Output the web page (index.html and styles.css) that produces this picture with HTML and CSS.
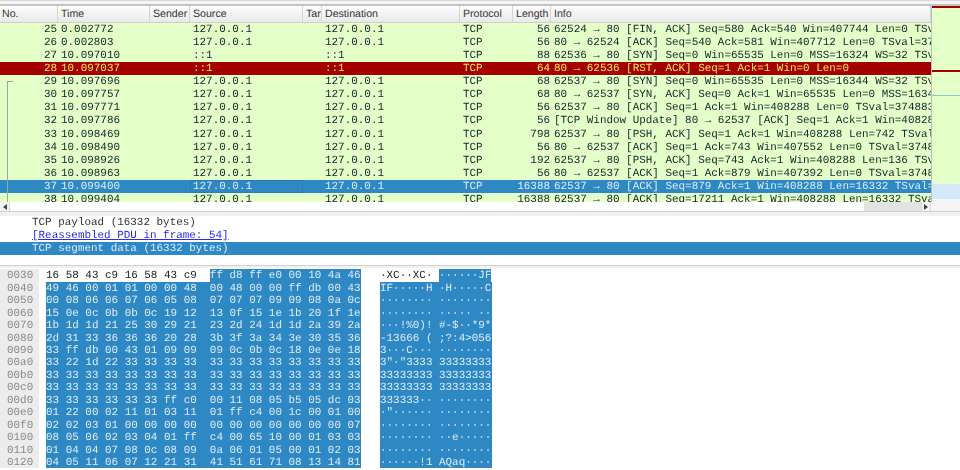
FILE: index.html
```html
<!DOCTYPE html>
<html lang="en">
<head>
<meta charset="utf-8">
<title>Wireshark packet capture</title>
<link rel="stylesheet" href="styles.css">
</head>
<body>
<div class="app">
  <div class="topstrip"></div>
  <section class="packets">
    <div class="list">
      <div class="row head">
        <span class="c no">No.</span><span class="c time">Time</span><span class="c sender">Sender</span><span class="c src">Source</span><span class="c tar">Tar</span><span class="c dst">Destination</span><span class="c proto">Protocol</span><span class="c len">Length</span><span class="c info">Info</span>
      </div>
      <div class="rows">
        <div class="bracket"></div>
        <div class="row"><span class="c no">25</span><span class="c time">0.002772</span><span class="c sender"></span><span class="c src">127.0.0.1</span><span class="c tar"></span><span class="c dst">127.0.0.1</span><span class="c proto">TCP</span><span class="c len">56</span><span class="c info">62524 → 80 [FIN, ACK] Seq=580 Ack=540 Win=407744 Len=0 TSv</span></div>
        <div class="row"><span class="c no">26</span><span class="c time">0.002803</span><span class="c sender"></span><span class="c src">127.0.0.1</span><span class="c tar"></span><span class="c dst">127.0.0.1</span><span class="c proto">TCP</span><span class="c len">56</span><span class="c info">80 → 62524 [ACK] Seq=540 Ack=581 Win=407712 Len=0 TSval=37</span></div>
        <div class="row"><span class="c no">27</span><span class="c time">10.097010</span><span class="c sender"></span><span class="c src">::1</span><span class="c tar"></span><span class="c dst">::1</span><span class="c proto">TCP</span><span class="c len">88</span><span class="c info">62536 → 80 [SYN] Seq=0 Win=65535 Len=0 MSS=16324 WS=32 TSv</span></div>
        <div class="row reset"><span class="c no">28</span><span class="c time">10.097037</span><span class="c sender"></span><span class="c src">::1</span><span class="c tar"></span><span class="c dst">::1</span><span class="c proto">TCP</span><span class="c len">64</span><span class="c info">80 → 62536 [RST, ACK] Seq=1 Ack=1 Win=0 Len=0</span></div>
        <div class="row"><span class="c no">29</span><span class="c time">10.097696</span><span class="c sender"></span><span class="c src">127.0.0.1</span><span class="c tar"></span><span class="c dst">127.0.0.1</span><span class="c proto">TCP</span><span class="c len">68</span><span class="c info">62537 → 80 [SYN] Seq=0 Win=65535 Len=0 MSS=16344 WS=32 TSv</span></div>
        <div class="row"><span class="c no">30</span><span class="c time">10.097757</span><span class="c sender"></span><span class="c src">127.0.0.1</span><span class="c tar"></span><span class="c dst">127.0.0.1</span><span class="c proto">TCP</span><span class="c len">68</span><span class="c info">80 → 62537 [SYN, ACK] Seq=0 Ack=1 Win=65535 Len=0 MSS=1634</span></div>
        <div class="row"><span class="c no">31</span><span class="c time">10.097771</span><span class="c sender"></span><span class="c src">127.0.0.1</span><span class="c tar"></span><span class="c dst">127.0.0.1</span><span class="c proto">TCP</span><span class="c len">56</span><span class="c info">62537 → 80 [ACK] Seq=1 Ack=1 Win=408288 Len=0 TSval=374883</span></div>
        <div class="row"><span class="c no">32</span><span class="c time">10.097786</span><span class="c sender"></span><span class="c src">127.0.0.1</span><span class="c tar"></span><span class="c dst">127.0.0.1</span><span class="c proto">TCP</span><span class="c len">56</span><span class="c info">[TCP Window Update] 80 → 62537 [ACK] Seq=1 Ack=1 Win=40828</span></div>
        <div class="row"><span class="c no">33</span><span class="c time">10.098469</span><span class="c sender"></span><span class="c src">127.0.0.1</span><span class="c tar"></span><span class="c dst">127.0.0.1</span><span class="c proto">TCP</span><span class="c len">798</span><span class="c info">62537 → 80 [PSH, ACK] Seq=1 Ack=1 Win=408288 Len=742 TSval</span></div>
        <div class="row"><span class="c no">34</span><span class="c time">10.098490</span><span class="c sender"></span><span class="c src">127.0.0.1</span><span class="c tar"></span><span class="c dst">127.0.0.1</span><span class="c proto">TCP</span><span class="c len">56</span><span class="c info">80 → 62537 [ACK] Seq=1 Ack=743 Win=407552 Len=0 TSval=3748</span></div>
        <div class="row"><span class="c no">35</span><span class="c time">10.098926</span><span class="c sender"></span><span class="c src">127.0.0.1</span><span class="c tar"></span><span class="c dst">127.0.0.1</span><span class="c proto">TCP</span><span class="c len">192</span><span class="c info">62537 → 80 [PSH, ACK] Seq=743 Ack=1 Win=408288 Len=136 TSv</span></div>
        <div class="row"><span class="c no">36</span><span class="c time">10.098963</span><span class="c sender"></span><span class="c src">127.0.0.1</span><span class="c tar"></span><span class="c dst">127.0.0.1</span><span class="c proto">TCP</span><span class="c len">56</span><span class="c info">80 → 62537 [ACK] Seq=1 Ack=879 Win=407392 Len=0 TSval=3748</span></div>
        <div class="row selected"><span class="c no">37</span><span class="c time">10.099400</span><span class="c sender"></span><span class="c src focus">127.0.0.1</span><span class="c tar"></span><span class="c dst">127.0.0.1</span><span class="c proto">TCP</span><span class="c len">16388</span><span class="c info">62537 → 80 [ACK] Seq=879 Ack=1 Win=408288 Len=16332 TSval=</span></div>
        <div class="row"><span class="c no">38</span><span class="c time">10.099404</span><span class="c sender"></span><span class="c src">127.0.0.1</span><span class="c tar"></span><span class="c dst">127.0.0.1</span><span class="c proto">TCP</span><span class="c len">16388</span><span class="c info">62537 → 80 [ACK] Seq=17211 Ack=1 Win=408288 Len=16332 TSva</span></div>
      </div>
    </div>
    <div class="minimap">
      <div class="mm-red"></div>
      <div class="mm-green mm-b"></div>
      <div class="mm-red"></div>
      <div class="mm-green mm-c"></div>
      <div class="mm-teal"></div>
      <div class="mm-green mm-d"></div>
      <div class="mm-sel"></div>
    </div>
  </section>
  <div class="hscroll">
    <div class="arrow-btn"><span class="tri-left"></span></div>
    <div class="hthumb"></div>
    <div class="htrough"></div>
    <div class="arrow-btn end"><span class="tri-right"></span></div>
    <div class="hcorner"></div>
  </div>
  <div class="splitter"></div>
  <section class="details">
    <div class="line">TCP payload (16332 bytes)</div>
    <div class="line"><span class="link">[Reassembled PDU in frame: 54]</span></div>
    <div class="line picked">TCP segment data (16332 bytes)</div>
  </section>
  <div class="splitter thin"></div>
  <section class="hex">
    <div class="hr"><span class="off">0030</span><span class="b"><span class="plain">16 58 43 c9 16 58 43 c9  </span><span class="sel">ff d8 ff e0 00 10 4a 46</span></span><span class="a"><span class="plain">·XC··XC· </span><span class="sel">······JF</span></span></div>
    <div class="hr"><span class="off">0040</span><span class="b sel">49 46 00 01 01 00 00 48  00 48 00 00 ff db 00 43</span><span class="a sel">IF·····H ·H·····C</span></div>
    <div class="hr"><span class="off">0050</span><span class="b sel">00 08 06 06 07 06 05 08  07 07 07 09 09 08 0a 0c</span><span class="a sel">········ ········</span></div>
    <div class="hr"><span class="off">0060</span><span class="b sel">15 0e 0c 0b 0b 0c 19 12  13 0f 15 1e 1b 20 1f 1e</span><span class="a sel">········ ····· ··</span></div>
    <div class="hr"><span class="off">0070</span><span class="b sel">1b 1d 1d 21 25 30 29 21  23 2d 24 1d 1d 2a 39 2a</span><span class="a sel">···!%0)! #-$··*9*</span></div>
    <div class="hr"><span class="off">0080</span><span class="b sel">2d 31 33 36 36 36 20 28  3b 3f 3a 34 3e 30 35 36</span><span class="a sel">-13666 ( ;?:4&gt;056</span></div>
    <div class="hr"><span class="off">0090</span><span class="b sel">33 ff db 00 43 01 09 09  09 0c 0b 0c 18 0e 0e 18</span><span class="a sel">3···C··· ········</span></div>
    <div class="hr"><span class="off">00a0</span><span class="b sel">33 22 1d 22 33 33 33 33  33 33 33 33 33 33 33 33</span><span class="a sel">3"·"3333 33333333</span></div>
    <div class="hr"><span class="off">00b0</span><span class="b sel">33 33 33 33 33 33 33 33  33 33 33 33 33 33 33 33</span><span class="a sel">33333333 33333333</span></div>
    <div class="hr"><span class="off">00c0</span><span class="b sel">33 33 33 33 33 33 33 33  33 33 33 33 33 33 33 33</span><span class="a sel">33333333 33333333</span></div>
    <div class="hr"><span class="off">00d0</span><span class="b sel">33 33 33 33 33 33 ff c0  00 11 08 05 b5 05 dc 03</span><span class="a sel">333333·· ········</span></div>
    <div class="hr"><span class="off">00e0</span><span class="b sel">01 22 00 02 11 01 03 11  01 ff c4 00 1c 00 01 00</span><span class="a sel">·"······ ········</span></div>
    <div class="hr"><span class="off">00f0</span><span class="b sel">02 02 03 01 00 00 00 00  00 00 00 00 00 00 00 07</span><span class="a sel">········ ········</span></div>
    <div class="hr"><span class="off">0100</span><span class="b sel">08 05 06 02 03 04 01 ff  c4 00 65 10 00 01 03 03</span><span class="a sel">········ ··e·····</span></div>
    <div class="hr"><span class="off">0110</span><span class="b sel">01 04 04 07 08 0c 08 09  0a 06 01 05 00 01 02 03</span><span class="a sel">········ ········</span></div>
    <div class="hr"><span class="off">0120</span><span class="b sel">04 05 11 06 07 12 21 31  41 51 61 71 08 13 14 81</span><span class="a sel">······!1 AQaq····</span></div>
  </section>
</div>
</body>
</html>
```
FILE: styles.css
```css
* { box-sizing: border-box; }
html, body { margin: 0; padding: 0; background: #fff; overflow: hidden; }
.app {
  width: 960px; height: 470px; display: flex; flex-direction: column;
  font-family: "Liberation Mono", monospace; font-size: 10.93px;
  color: #2e3436; text-rendering: geometricPrecision; overflow: hidden;
  filter: blur(0.35px);
}
.topstrip { flex: none; height: 6px; background: #f4f4f4; border-top: 1px solid #d8d8d8; border-bottom: 2px solid #c4c4c4; }
.packets { flex: none; height: 196px; display: flex; }
.list { flex: none; width: 931px; display: flex; flex-direction: column; overflow: hidden; }
.rows { position: relative; flex: 1; overflow: hidden; background: #e4ffc7; }
.row { display: flex; height: 13.13px; line-height: 14px; white-space: pre; background: #e4ffc7; color: #12272e; }
.c { flex: none; padding: 0 1px 0 3px; overflow: hidden; }
.no { width: 58px; text-align: right; }
.time { width: 92px; }
.sender { width: 40px; }
.src { width: 113px; }
.tar { width: 19px; }
.dst { width: 138px; }
.proto { width: 53px; }
.len { width: 38px; text-align: right; }
.info { width: 380px; }
.reset { background: #a40000; color: #fce94f; }
.selected { background: #2e88c4; color: #dcebf6; }
.focus { box-shadow: inset 0 0 0 1px #2a7cb3; }
.head {
  flex: none; height: 16.6px; line-height: 16px; color: #333;
  font-family: "Liberation Sans", sans-serif; font-size: 10.6px;
  background: linear-gradient(#fdfdfd, #e9e9e9); border-bottom: 1px solid #cfcfcf;
}
.head .c { border-right: 1px solid #d4d4d4; text-align: left; }
.head .no { padding-left: 2px; }
.bracket {
  position: absolute; left: 7px; top: 58px; width: 6px; height: 130px;
  border-left: 1px solid #9aa89a; border-top: 1px solid #9aa89a; z-index: 1;
}
.minimap { flex: 1; display: flex; flex-direction: column; border-left: 1px solid #bdbdbd; background: #f4f4f4; }
.mm-green { background: #e4ffc7; }
.mm-red { height: 2px; background: #a40000; }
.mm-b { height: 62px; }
.mm-c { height: 23px; }
.mm-teal { height: 1px; background: #8fc7cf; }
.mm-d { height: 88px; }
.mm-sel { height: 15px; background: #d5e8fa; }
.hscroll { flex: none; height: 10px; display: flex; background: #fff; border-bottom: 1px solid #d0d0d0; }
.arrow-btn { flex: none; width: 10px; display: flex; align-items: center; justify-content: center; background: #f3f3f3; border-right: 1px solid #d6d6d6; }
.arrow-btn.end { border-left: 1px solid #d6d6d6; }
.tri-left { border: 3px solid transparent; border-right: 4px solid #444; border-left: 0; }
.tri-right { border: 3px solid transparent; border-left: 4px solid #444; border-right: 0; }
.hthumb { flex: none; width: 854px; background: #fefefe; }
.htrough { flex: none; width: 57px; background: #e2e2e2; }
.hcorner { flex: 1; background: #f5f5f5; }
.splitter { flex: none; height: 4px; background: #f1f1f1; }
.splitter.thin { height: 3px; border-top: 1px solid #d0d0d0; margin-top: 10px; }
.details { flex: none; }
.line { height: 13.13px; line-height: 14px; padding-left: 32px; white-space: pre; color: #2e3436; }
.link { color: #2a2af0; text-decoration: underline; }
.picked { background: #2e88c4; color: #dcebf6; }
.hex { flex: 1; padding-top: 1px; }
.hr { display: flex; height: 12.44px; line-height: 14px; white-space: pre; }
.off { flex: none; width: 46px; padding-left: 7px; color: #8a8a8a; background: linear-gradient(90deg, #ececec 39px, #fff 39px); }
.b { flex: none; width: 315px; }
.a { flex: none; width: 112px; margin-left: 19px; }
.sel { background: #2e88c4; color: #dcebf6; }
.plain { color: #222; }
.b .sel, .a .sel { display: inline-block; height: 100%; }
```
